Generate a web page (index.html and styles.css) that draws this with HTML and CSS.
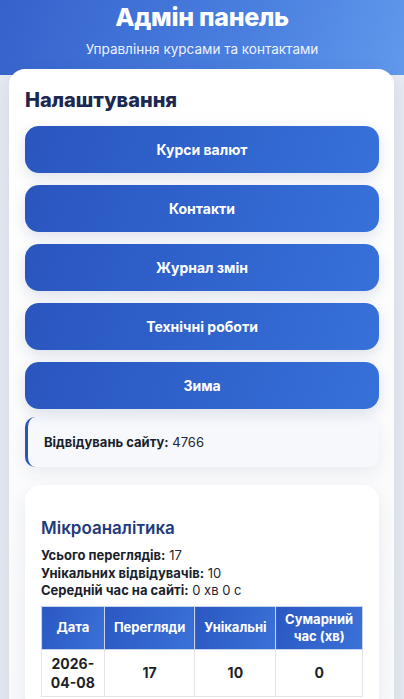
FILE: index.html
```html
<!DOCTYPE html>
<html lang="uk">
<head>
<meta charset="utf-8">
<meta name="viewport" content="width=device-width, initial-scale=1">
<title>Адмін панель</title>
<link rel="stylesheet" href="styles.css">
</head>
<body>
<header class="hero">
  <h1 class="hero-title">Адмін панель</h1>
  <p class="hero-sub">Управління курсами та контактами</p>
</header>
<main class="panel">
  <h2 class="panel-title">Налаштування</h2>
  <nav class="menu">
    <button class="menu-btn">Курси валют</button>
    <button class="menu-btn">Контакти</button>
    <button class="menu-btn">Журнал змін</button>
    <button class="menu-btn">Технічні роботи</button>
    <button class="menu-btn">Зима</button>
  </nav>
  <div class="visits"><span><b>Відвідувань сайту:</b> 4766</span></div>
  <section class="analytics">
    <h3 class="analytics-title">Мікроаналітика</h3>
    <div class="stats">
      <div><b>Усього переглядів:</b> 17</div>
      <div><b>Унікальних відвідувачів:</b> 10</div>
      <div><b>Середній час на сайті:</b> 0 хв 0 с</div>
    </div>
    <table class="grid">
      <thead>
        <tr>
          <th class="c-date">Дата</th>
          <th class="c-views">Перегляди</th>
          <th class="c-uniq">Унікальні</th>
          <th class="c-time">Сумарний час (хв)</th>
        </tr>
      </thead>
      <tbody>
        <tr>
          <td>2026-<br>04-08</td>
          <td>17</td>
          <td>10</td>
          <td>0</td>
        </tr>
      </tbody>
    </table>
  </section>
</main>
</body>
</html>
```
FILE: styles.css
```css
* { box-sizing: border-box; }
html, body { margin: 0; padding: 0; }
body {
  font-family: Inter, "Noto Sans", "DejaVu Sans", sans-serif;
  background: #e6eaf1;
  color: #1b2030;
  overflow: hidden;
}
.hero {
  background: linear-gradient(110deg, #3562cb 0%, #4a7fdf 60%, #6199ec 100%);
  color: #fff;
  text-align: center;
  padding: 0 0 16px;
}
.hero-title {
  margin: 0;
  font-size: 25px;
  line-height: 34px;
  font-weight: 800;
  letter-spacing: -0.3px;
}
.hero-sub {
  margin: 5px 0 0;
  font-size: 13.5px;
  line-height: 20px;
  font-weight: 400;
  color: #eef3ff;
}
.panel {
  margin: -6px 10px 0 9px;
  background: linear-gradient(180deg, #ffffff 0%, #f8f9fb 100%);
  border-radius: 16px;
  padding: 16px 15px 20px 16px;
  box-shadow: 0 6px 20px rgba(30, 50, 90, 0.10);
}
.panel-title {
  margin: 0 0 11px;
  font-size: 20px;
  line-height: 30px;
  font-weight: 800;
  color: #1c2850;
}
.menu {
  display: flex;
  flex-direction: column;
  gap: 12px;
}
.menu-btn {
  display: block;
  width: 100%;
  height: 47px;
  border: none;
  border-radius: 14px;
  background: linear-gradient(110deg, #2a55bf 0%, #3671d9 100%);
  color: #fff;
  font-family: inherit;
  font-size: 14px;
  font-weight: 700;
  box-shadow: 0 5px 14px rgba(30, 60, 120, 0.14);
}
.visits {
  margin-top: 8px;
  height: 50px;
  display: flex;
  align-items: center;
  padding-left: 16px;
  background: #f6f8fc;
  border-left: 3px solid #2a55b8;
  border-radius: 10px;
  font-size: 13px;
  color: #222633;
  box-shadow: 0 6px 16px rgba(30, 50, 90, 0.08);
}
.visits b { font-weight: 700; color: #1b1f2c; }
.analytics {
  margin-top: 18px;
  background: #fff;
  border-radius: 16px;
  padding: 31px 16px 16px;
  box-shadow: 0 6px 18px rgba(30, 50, 90, 0.08);
}
.analytics-title {
  margin: 0 0 7px;
  font-size: 17px;
  line-height: 24px;
  font-weight: 600;
  color: #1f3a7c;
}
.stats {
  font-size: 13px;
  line-height: 17.5px;
  color: #232633;
}
.stats b { font-weight: 700; color: #1b1f2c; }
.grid {
  margin-top: 6px;
  width: 322px;
  border-collapse: collapse;
  font-size: 13px;
}
.grid th {
  background: linear-gradient(110deg, #2b57c1 0%, #3a72d8 100%);
  color: #fff;
  font-weight: 700;
  height: 43px;
  line-height: 17px;
  padding: 4px 4px;
  border: 1px solid #c9d5ee;
  text-align: center;
}
.grid td {
  height: 46px;
  padding: 4px 4px;
  border: 1px solid #e2e4e8;
  text-align: center;
  font-weight: 700;
  font-size: 14px;
  line-height: 19px;
  color: #1c1f28;
  background: #fff;
}
.c-date { width: 63px; }
.c-views { width: 91px; }
.c-uniq { width: 81px; }
.c-time { width: 87px; }
```
